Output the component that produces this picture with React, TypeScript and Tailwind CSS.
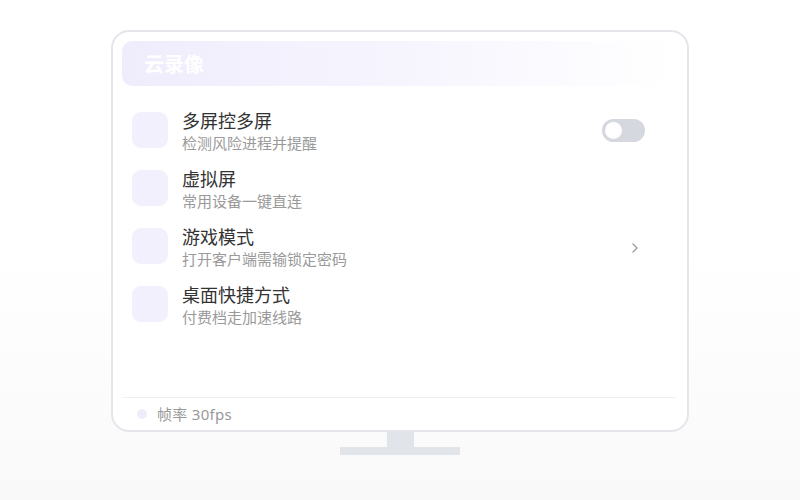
import React from 'react';

const rows = [
  { title: '多屏控多屏', desc: '检测风险进程并提醒', right: 'toggle' },
  { title: '虚拟屏', desc: '常用设备一键直连', right: '' },
  { title: '游戏模式', desc: '打开客户端需输锁定密码', right: 'chevron' },
  { title: '桌面快捷方式', desc: '付费档走加速线路', right: '' },
];

export default function App() {
  return (
    <div
      className="w-[800px] h-[500px] flex flex-col items-center pt-[30px] bg-gradient-to-b from-white from-50% to-[#f9f9fa]"
      style={{ fontFamily: '"Noto Sans", "Noto Sans CJK SC", sans-serif' }}
    >
      {/* Screen */}
      <div className="w-[578px] h-[402px] border-2 border-[#e4e6eb] rounded-[18px] bg-white flex flex-col pt-[9px] pl-[9px] pr-[11px]">
        <div className="h-[45px] rounded-[10px] bg-gradient-to-r from-[#efedfc] via-[#f6f5fe] to-white flex items-center px-[22px] pt-[3px]">
          <span className="text-[20px] font-bold text-white">云录像</span>
        </div>

        <div className="flex flex-col gap-[22px] mt-[26px] pl-[10px] pr-[31px]">
          {rows.map((r) => (
            <div key={r.title} className="flex items-center h-[36px]">
              <div className="w-[36px] h-[36px] rounded-[9px] bg-[#f2f0fd] shrink-0" />
              <div className="ml-[14px] flex flex-col flex-1 mt-[4px]">
                <span className="text-[18px] leading-[22px] text-[#333]">{r.title}</span>
                <span className="text-[15px] leading-[22px] text-[#9a9a9a]">{r.desc}</span>
              </div>
              {r.right === 'toggle' && (
                <div className="w-[43px] h-[23px] rounded-full bg-[#d5d8de] p-[3px] flex items-center">
                  <div className="w-[17px] h-[17px] rounded-full bg-white" />
                </div>
              )}
              {r.right === 'chevron' && (
                <svg width="8" height="12" viewBox="0 0 8 12" className="mr-[6px] mt-[4px]">
                  <path d="M2 2l4 4-4 4" fill="none" stroke="#9aa0a8" strokeWidth="1.4" strokeLinecap="round" strokeLinejoin="round" />
                </svg>
              )}
            </div>
          ))}
        </div>

        <div className="mt-auto border-t border-[#eef0f3] h-[33px] flex items-center pl-[15px]">
          <div className="w-[10px] h-[10px] rounded-full bg-[#efedfc]" />
          <span className="ml-[10px] text-[15px] tracking-[0.3px] text-[#999]">帧率 30fps</span>
        </div>
      </div>

      {/* Stand */}
      <div className="w-[27px] h-[15px] bg-[#e1e4e8]" />
      <div className="w-[120px] h-[8px] bg-[#e1e4e8]" />
    </div>
  );
}
